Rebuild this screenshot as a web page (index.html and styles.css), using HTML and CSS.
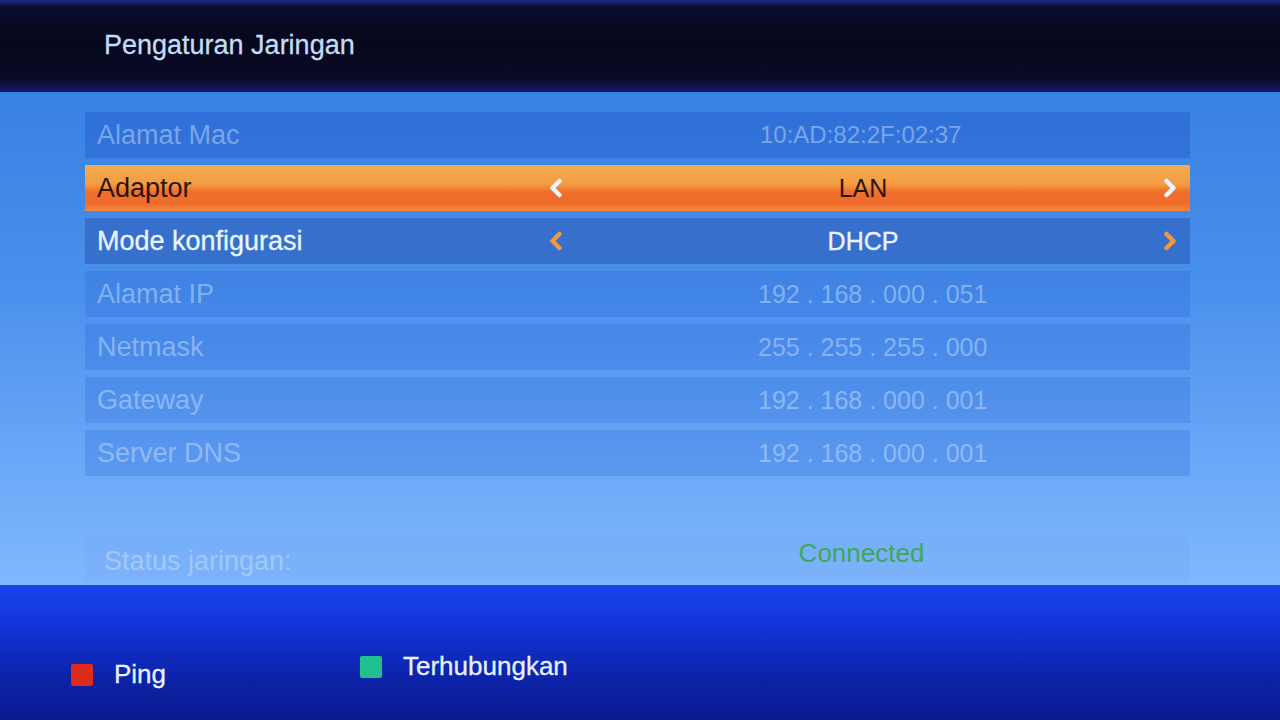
FILE: index.html
```html
<!DOCTYPE html>
<html lang="id">
<head>
<meta charset="utf-8">
<title>Pengaturan Jaringan</title>
<link rel="stylesheet" href="styles.css">
</head>
<body>
<div class="screen">
  <header class="header">
    <h1 class="title">Pengaturan Jaringan</h1>
  </header>
  <main class="main">
    <div class="list">
      <div class="row row-dim row-top">
        <span class="label">Alamat Mac</span>
        <span class="value value-left value-mac">10:AD:82:2F:02:37</span>
      </div>
      <div class="row row-focus">
        <span class="label">Adaptor</span>
        <span class="value value-arrows">
          <svg class="chev" viewBox="0 0 16 20"><path d="M11.5 3 L4.5 10 L11.5 17" /></svg>
          <span class="val-text">LAN</span>
          <svg class="chev" viewBox="0 0 16 20"><path d="M4.5 3 L11.5 10 L4.5 17" /></svg>
        </span>
      </div>
      <div class="row row-active">
        <span class="label">Mode konfigurasi</span>
        <span class="value value-arrows">
          <svg class="chev chev-orange" viewBox="0 0 16 20"><path d="M11.5 3 L4.5 10 L11.5 17" /></svg>
          <span class="val-text">DHCP</span>
          <svg class="chev chev-orange" viewBox="0 0 16 20"><path d="M4.5 3 L11.5 10 L4.5 17" /></svg>
        </span>
      </div>
      <div class="row row-dim">
        <span class="label">Alamat IP</span>
        <span class="value value-left">192 . 168 . 000 . 051</span>
      </div>
      <div class="row row-dim">
        <span class="label">Netmask</span>
        <span class="value value-left">255 . 255 . 255 . 000</span>
      </div>
      <div class="row row-dim">
        <span class="label">Gateway</span>
        <span class="value value-left">192 . 168 . 000 . 001</span>
      </div>
      <div class="row row-dim">
        <span class="label">Server DNS</span>
        <span class="value value-left">192 . 168 . 000 . 001</span>
      </div>
    </div>
    <div class="row row-dim row-status">
      <span class="label">Status jaringan:</span>
      <span class="value value-ok">Connected</span>
    </div>
  </main>
  <footer class="footer">
    <div class="key key-red">
      <span class="swatch swatch-red"></span>
      <span class="key-label">Ping</span>
    </div>
    <div class="key key-green">
      <span class="swatch swatch-green"></span>
      <span class="key-label">Terhubungkan</span>
    </div>
  </footer>
</div>
</body>
</html>
```

FILE: styles.css
```css
html, body {
  margin: 0;
  padding: 0;
  background: #000;
}

.screen {
  width: 1280px;
  height: 720px;
  display: flex;
  flex-direction: column;
  overflow: hidden;
  font-family: "Liberation Sans", Arial, sans-serif;
}

.header {
  height: 92px;
  flex: none;
  background: linear-gradient(180deg, #1c2a8a 0px, #0c0c30 7px, #07071c 40px, #090a26 78px, #16186a 92px);
  display: flex;
  align-items: flex-start;
}

.title {
  margin: 30px 0 0 104px;
  font-size: 27px;
  font-weight: normal;
  color: #c0def6;
  letter-spacing: 0;
  -webkit-text-stroke: 0.3px #c0def6;
}

.main {
  height: 493px;
  flex: none;
  background: linear-gradient(180deg, #3880e2 0%, #4a90ec 40%, #6aa8f8 75%, #80b8fc 100%);
  padding: 20px 90px 0 85px;
  box-sizing: border-box;
  display: flex;
  flex-direction: column;
}

.list {
  display: flex;
  flex-direction: column;
  gap: 7px;
}

.row {
  height: 46px;
  display: flex;
  align-items: center;
  box-sizing: border-box;
  padding-left: 12px;
}

.label {
  width: 440px;
  font-size: 27px;
  flex: none;
}

.value {
  flex: 1;
  text-align: center;
  font-size: 25px;
  padding-right: 116px;
  padding-left: 112px;
}

.value-left {
  text-align: left;
  padding-left: 221px;
  padding-right: 0;
}

.value-mac {
  font-size: 24px;
  padding-left: 223px;
}

.row-dim {
  background: rgba(30, 90, 210, 0.22);
}

.row-dim .label,
.row-dim .value {
  color: rgba(215, 232, 255, 0.45);
}

.row-top {
  background: rgba(20, 70, 190, 0.28);
}

.row-focus {
  background: linear-gradient(180deg, #f2ac4e 0%, #f39c42 42%, #f0702a 58%, #ef6a2a 82%, #f3883c 100%);
}

.row-focus .label,
.row-focus .val-text {
  color: #2c1410;
}

.row-active {
  background: #3670cc;
}

.row-active .label,
.row-active .val-text {
  color: #eaf4ff;
  -webkit-text-stroke: 0.3px #eaf4ff;
}

.value-arrows {
  display: flex;
  align-items: center;
  justify-content: space-between;
  padding: 0 12px 0 11px;
}

.val-text {
  font-size: 25px;
}

.chev {
  width: 16px;
  height: 20px;
  flex: none;
}

.chev path {
  fill: none;
  stroke: #e8f4ff;
  stroke-width: 4.5;
  stroke-linecap: round;
  stroke-linejoin: round;
}

.chev-orange path {
  stroke: #f0983a;
}

.row-status {
  margin-top: 59px;
  background: rgba(120, 170, 245, 0.35);
}

.row-status .label {
  padding-left: 7px;
  margin-top: 6px;
  width: 433px;
}

.row-status .value.value-ok {
  color: #3da85a;
  margin-top: -10px;
  font-size: 26px;
}

.footer {
  height: 135px;
  flex: none;
  background: linear-gradient(180deg, #1a44ee 0%, #1234d8 30%, #0c22a8 70%, #0a1a8c 100%);
  display: flex;
  align-items: flex-start;
  padding-left: 71px;
  box-sizing: border-box;
}

.key {
  display: flex;
  align-items: center;
}

.key-red {
  margin-top: 74px;
  width: 289px;
}

.key-green {
  margin-top: 66px;
}

.swatch {
  width: 22px;
  height: 22px;
  border-radius: 2px;
  flex: none;
}

.swatch-red {
  background: #e02a1c;
}

.swatch-green {
  background: #22c08e;
}

.key-label {
  margin-left: 21px;
  font-size: 26px;
  color: #e4f0ff;
  -webkit-text-stroke: 0.3px #e4f0ff;
}
```
